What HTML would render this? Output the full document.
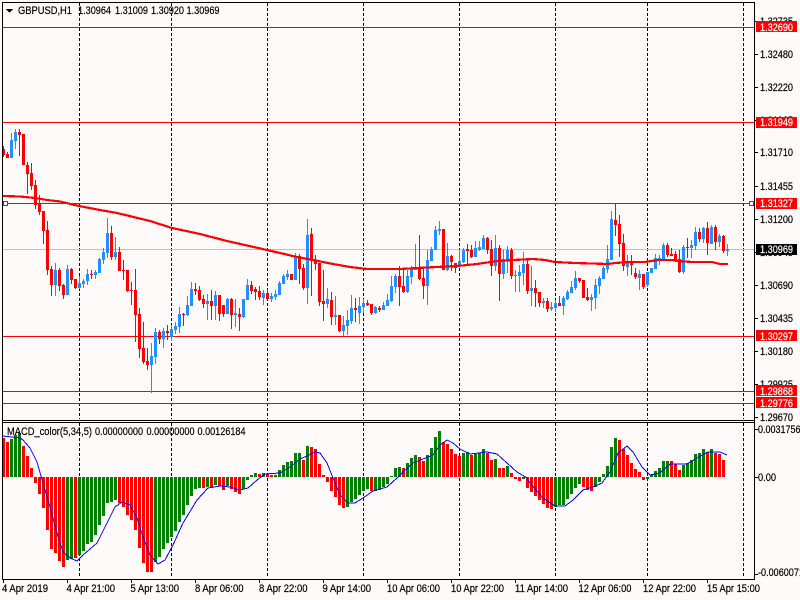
<!DOCTYPE html>
<html><head><meta charset="utf-8"><title>GBPUSD,H1</title>
<style>
html,body{margin:0;padding:0;background:#fffafa;width:800px;height:600px;overflow:hidden}
svg{display:block}
text{font-family:"Liberation Sans",sans-serif;font-size:11px;fill:#000;stroke:#000;stroke-width:.2px}
.w text,text.w{fill:#fff;stroke:#fff}
</style></head><body>
<svg width="800" height="600" viewBox="0 0 800 600" xmlns="http://www.w3.org/2000/svg">
<rect width="800" height="600" fill="#fffafa"/>
<g shape-rendering="crispEdges">
<!-- grid -->
<path d="M79.5 3V419M171.5 3V419M267.5 3V419M363.5 3V419M459.5 3V419M555.5 3V419M647.5 3V419M743.5 3V419M79.5 423V578M171.5 423V578M267.5 423V578M363.5 423V578M459.5 423V578M555.5 423V578M647.5 423V578M743.5 423V578" stroke="#000" stroke-width="1" stroke-dasharray="3 2" fill="none"/>
<!-- horizontal levels -->
<path d="M3 249.5H754" stroke="#c0c0c0" fill="none"/>
<path d="M3 27.5H754M3 122.5H754M3 203.5H754M3 336.5H754M3 391.5H754M3 403.5H754" stroke="#ff0000" fill="none"/>
<!-- blue wicks -->
<g transform="translate(.5 0)" fill="none">
<path stroke="#1e90ff" stroke-width="1" d="M11 133V158M15 129V149M55 263V296M67 265V295M79 276V289M83 279V288M87 269V285M95 270V279M99 258V273M103 248V264M107 218V258M115 237V260M151 343V393M155 328V364M163 328V348M171 325V341M175 322V334M179 307V333M187 296V316M191 282V306M207 294V320M215 291V320M227 298V314M235 299V327M243 299V318M247 279V300M263 290V305M271 293V302M275 290V300M279 281V295M283 274V284M287 270V280M295 253V280M307 219V304M327 288V308M335 296V325M343 316V336M347 310V335M351 295V324M359 297V324M363 299V313M375 306V314M383 302V310M387 294V306M391 276V302M395 274V293M407 270V293M411 266V284M415 244V270M427 250V305M431 247V261M435 226V250M439 221V235M447 243V271M459 249V266M463 248V263M475 241V257M479 241V251M483 235V249M495 235V271M503 250V279M507 246V273M515 270V292M519 265V292M523 252V285M531 266V306M543 298V308M551 302V311M555 300V312M563 296V315M567 290V300M571 281V293M575 271V290M591 294V311M595 279V309M599 276V294M603 266V279M607 245V273M611 211V260M627 255V276M639 270V290M647 272V287M651 268V273M655 254V269M659 255V265M663 243V260M683 245V274M691 240V258M695 227V250M703 227V243M711 225V244M719 234V247M727 244V256"/>
<path stroke="#1e90ff" stroke-width="3" d="M11 140V158M15 132V141M55 270V285M67 269V295M79 283V288M83 281V284M87 274V281M95 272V275M99 259V273M103 252V260M107 233V253M115 252V257M151 356V365M155 332V357M163 331V339M171 329V337M175 326V330M179 314V327M187 305V315M191 289V306M207 301V304M215 295V306M227 299V314M235 313V315M243 299V317M247 285V300M263 293V298M271 296V299M275 294V297M279 283V295M283 276V284M287 274V277M295 256V280M307 235V288M327 299V304M335 315V317M343 325V331M347 320V326M351 308V321M359 306V313M363 303V307M375 307V313M383 305V310M387 300V306M391 286V301M395 276V287M407 276V292M411 268V277M415 267V270M427 260V286M431 249V261M435 230V250M439 229V231M447 256V270M459 261V265M463 250V262M475 248V257M479 247V250M483 238V249M495 248V266M503 259V274M507 250V260M515 275V276M519 272V276M523 264V273M531 288V291M543 301V303M551 307V309M555 303V308M563 298V306M567 292V299M571 287V293M575 278V288M591 297V300M595 285V298M599 278V286M603 268V279M607 259V269M611 219V260M627 262V267M639 274V278M647 272V285M651 268V273M655 258V269M659 258V259M663 245V259M683 247V272M691 245V248M695 232V246M703 228V239M711 227V244M719 236V242M727 249V251"/>
<path stroke="#ff0000" stroke-width="1" d="M3 146V157M7 152V158M19 129V156M23 134V165M27 162V194M31 163V190M35 180V209M39 195V215M43 211V244M47 221V275M51 266V296M59 268V291M63 284V299M71 268V284M75 279V289M91 270V279M111 226V260M119 247V271M123 260V280M127 270V292M131 282V305M135 269V342M139 308V358M143 322V364M147 348V370M159 330V344M167 325V340M183 313V326M195 283V295M199 286V301M203 295V308M211 290V320M219 295V321M223 305V317M231 298V329M239 308V331M251 281V294M255 287V300M259 286V300M267 289V300M291 274V280M299 254V284M303 264V290M311 228V296M315 255V270M319 263V306M323 270V321M331 292V325M339 315V332M355 298V322M367 300V306M371 304V315M379 306V312M399 266V306M403 270V293M419 235V280M423 269V299M443 229V270M451 255V271M455 263V273M467 244V264M471 245V258M487 237V254M491 240V276M499 245V301M511 248V279M527 260V294M535 280V307M539 292V307M547 298V312M559 296V306M579 278V283M583 280V298M587 288V301M615 204V236M619 215V257M623 234V271M631 255V275M635 268V279M643 274V289M667 243V257M671 248V256M675 251V262M679 250V273M687 238V258M699 228V242M707 222V255M715 225V250M723 235V253"/>
<path stroke="#ff0000" stroke-width="3" d="M3 149V155M7 154V158M19 132V135M23 134V165M27 165V174M31 173V186M35 185V205M39 203V212M43 211V231M47 230V270M51 269V285M59 270V286M63 285V295M71 269V280M75 279V288M91 274V275M111 233V257M119 252V271M123 270V271M127 270V291M131 290V291M135 290V315M139 314V349M143 348V362M147 361V365M159 332V339M167 331V333M183 314V315M195 289V291M199 290V300M203 299V304M211 301V306M219 295V314M223 305V314M231 299V315M239 314V317M251 285V291M255 289V292M259 291V297M267 293V299M291 274V280M299 256V269M303 268V288M311 234V261M315 260V264M319 263V302M323 301V304M331 300V317M339 315V331M355 308V310M367 303V305M371 304V313M379 308V310M399 276V287M403 286V292M419 268V279M423 278V286M443 229V270M451 256V262M455 263V268M467 249V251M471 250V257M487 238V250M491 249V266M499 248V274M511 250V276M527 264V291M535 288V293M539 292V303M547 301V309M559 303V306M579 278V281M583 280V298M587 297V300M615 220V225M619 224V244M623 243V266M631 262V265M635 273V277M643 274V287M667 245V255M671 254V256M675 254V260M679 259V272M687 247V248M699 232V239M707 228V243M715 227V242M723 236V251"/>
</g>
<!-- MA -->
<polyline fill="none" stroke="#ff0000" stroke-width="2.2" shape-rendering="crispEdges" points="3,196 20,196.5 35,198 47,200 60,201.5 79,206 100,210 117,213 150,221 172,228 200,234 227,241 267,250 280,253 297,257 313,260 333,264 350,267 367,269 400,269 417,268 437,267 457,266 477,264 497,261 513,260 533,259 545,260 555,262 575,263 608,264 615,263 630,262 645,262 658,260 672,260 678,261 692,262 712,262 720,264 728,264"/>
<!-- markers -->
<g shape-rendering="crispEdges">
<rect x="3.5" y="201.5" width="4" height="4" fill="#fffafa" stroke="#ff0000"/>
<rect x="749.5" y="201.5" width="4" height="4" fill="#fffafa" stroke="#ff0000"/>
<!-- MACD bars -->
<g transform="translate(.5 0)" fill="none">
<path stroke="#008000" stroke-width="3" d="M11 477V439M15 477V435M19 477V433M67 477V560M71 477V559M79 477V555M83 477V551M87 477V544M91 477V542M95 477V535M99 477V525M103 477V516M107 477V503M111 477V502M115 477V500M155 477V562M159 477V557M163 477V549M167 477V543M171 477V537M175 477V531M179 477V522M183 477V515M187 477V505M191 477V496M195 477V489M199 477V488M207 477V487M215 477V485M227 477V486M243 477V489M247 477V480M251 477V475M255 477V473M263 477V473M275 477V475M279 477V470M283 477V465M287 477V462M291 477V461M295 477V453M299 477V453M307 477V446M347 477V507M351 477V502M355 477V499M359 477V495M363 477V491M367 477V489M375 477V491M379 477V490M383 477V487M387 477V484M391 477V476M395 477V468M399 477V467M407 477V463M411 477V458M415 477V455M427 477V455M431 477V448M435 477V437M439 477V431M463 477V453M467 477V452M475 477V454M479 477V453M483 477V449M495 477V459M507 477V466M523 477V479M555 477V507M559 477V505M563 477V505M567 477V499M571 477V494M575 477V488M579 477V484M595 477V487M599 477V482M603 477V474M607 477V466M611 477V447M615 477V438M647 477V479M651 477V475M655 477V471M659 477V468M663 477V461M667 477V461M683 477V465M687 477V463M691 477V460M695 477V454M699 477V453M703 477V449M711 477V449"/>
<path stroke="#ff0000" stroke-width="3" d="M3 477V438M7 477V442M23 477V446M27 477V456M31 477V468M35 477V483M39 477V494M43 477V508M47 477V530M51 477V549M55 477V553M59 477V561M63 477V567M75 477V558M119 477V503M123 477V507M127 477V515M131 477V520M135 477V530M139 477V548M143 477V563M147 477V572M151 477V572M203 477V488M211 477V488M219 477V486M223 477V490M231 477V489M235 477V492M239 477V494M259 477V474M267 477V474M271 477V475M303 477V460M311 477V447M315 477V449M319 477V464M323 477V475M327 477V482M331 477V491M335 477V497M339 477V505M343 477V508M371 477V491M403 477V468M419 477V457M423 477V461M443 477V442M447 477V444M451 477V449M455 477V454M459 477V456M471 477V455M487 477V453M491 477V460M499 477V468M503 477V468M511 477V473M515 477V479M519 477V481M527 477V488M531 477V492M535 477V496M539 477V500M543 477V504M547 477V508M551 477V509M583 477V487M587 477V490M591 477V491M619 477V440M623 477V449M627 477V455M631 477V463M635 477V469M639 477V472M643 477V480M671 477V461M675 477V464M679 477V470M707 477V452M715 477V453M719 477V454M723 477V460"/>
</g>
<!-- frame -->
<path d="M2.5 2V580M2 2.5H755M754.5 2V580M2 420.5H755M2 422.5H755M2 579.5H755" stroke="#000" fill="none"/>
<!-- ticks -->
<path d="M755 21.5H758M755 54.5H758M755 87.5H758M755 120.5H758M755 152.5H758M755 186.5H758M755 219.5H758M755 252.5H758M755 285.5H758M755 318.5H758M755 351.5H758M755 384.5H758M755 417.5H758M755 429.5H758M755 477.5H758M755 574.5H758M3.5 580V583M67.5 580V583M131.5 580V583M195.5 580V583M259.5 580V583M323.5 580V583M387.5 580V583M451.5 580V583M515.5 580V583M579.5 580V583M643.5 580V583M707.5 580V583" stroke="#000" fill="none"/>
</g>
<!-- signal -->
<polyline fill="none" stroke="#0000ff" stroke-width="1" shape-rendering="crispEdges" points="3,436 20,438 23,440 30,448 37,462 43,483 50,507 57,533 63,552 70,558 77,561 83,555 97,543 107,523 115,507 122,502 130,505 137,518 143,537 150,555 158,564 165,560 173,545 183,523 197,500 208,488 220,486 230,487 240,490 248,488 257,480 265,474 280,473 290,467 300,459 307,456 315,452 320,453 327,463 333,478 340,495 348,503 355,503 363,498 373,491 387,487 397,478 403,472 413,463 423,459 433,455 440,445 447,440 453,443 460,449 470,454 487,452 497,454 507,463 517,472 527,478 530,483 543,498 555,506 565,506 573,500 583,490 593,487 602,483 610,472 618,453 627,446 633,452 642,467 650,475 660,473 670,464 687,464 697,458 708,452 720,452 727,455"/>
<!-- title -->
<polygon points="6,9 13,9 9.5,13" fill="#000"/>
<text x="18" y="14" textLength="54" lengthAdjust="spacingAndGlyphs">GBPUSD,H1</text>
<text x="78" y="14" textLength="33" lengthAdjust="spacingAndGlyphs">1.30964</text>
<text x="115" y="14" textLength="33" lengthAdjust="spacingAndGlyphs">1.31009</text>
<text x="151" y="14" textLength="33" lengthAdjust="spacingAndGlyphs">1.30920</text>
<text x="186.5" y="14" textLength="33" lengthAdjust="spacingAndGlyphs">1.30969</text>
<text x="7" y="435" textLength="85" lengthAdjust="spacingAndGlyphs">MACD_color(5,34,5)</text>
<text x="95" y="435" textLength="48" lengthAdjust="spacingAndGlyphs">0.00000000</text>
<text x="146.5" y="435" textLength="48" lengthAdjust="spacingAndGlyphs">0.00000000</text>
<text x="197.5" y="435" textLength="48" lengthAdjust="spacingAndGlyphs">0.00126184</text>
<!-- right axis -->
<g>
<text x="760" y="25" textLength="33" lengthAdjust="spacingAndGlyphs">1.32735</text>
<text x="760" y="58" textLength="33" lengthAdjust="spacingAndGlyphs">1.32480</text>
<text x="760" y="91" textLength="33" lengthAdjust="spacingAndGlyphs">1.32220</text>
<text x="760" y="124" textLength="33" lengthAdjust="spacingAndGlyphs">1.31965</text>
<text x="760" y="156" textLength="33" lengthAdjust="spacingAndGlyphs">1.31710</text>
<text x="760" y="190" textLength="33" lengthAdjust="spacingAndGlyphs">1.31455</text>
<text x="760" y="223" textLength="33" lengthAdjust="spacingAndGlyphs">1.31200</text>
<text x="760" y="256" textLength="33" lengthAdjust="spacingAndGlyphs">1.30945</text>
<text x="760" y="289" textLength="33" lengthAdjust="spacingAndGlyphs">1.30690</text>
<text x="760" y="322" textLength="33" lengthAdjust="spacingAndGlyphs">1.30435</text>
<text x="760" y="355" textLength="33" lengthAdjust="spacingAndGlyphs">1.30180</text>
<text x="760" y="388" textLength="33" lengthAdjust="spacingAndGlyphs">1.29925</text>
<text x="760" y="421" textLength="33" lengthAdjust="spacingAndGlyphs">1.29670</text>
</g>
<!-- labels -->
<g shape-rendering="crispEdges">
<rect x="756" y="21" width="41" height="11" fill="#ff0000"/>
<rect x="756" y="117" width="41" height="11" fill="#ff0000"/>
<rect x="756" y="198" width="41" height="11" fill="#ff0000"/>
<rect x="756" y="244" width="41" height="11" fill="#000"/>
<rect x="756" y="330" width="41" height="11" fill="#ff0000"/>
<rect x="756" y="385" width="41" height="11" fill="#ff0000"/>
<rect x="756" y="397" width="41" height="11" fill="#ff0000"/>
</g>
<g class="w">
<text x="760" y="31" textLength="33" lengthAdjust="spacingAndGlyphs">1.32690</text>
<text x="760" y="126" textLength="33" lengthAdjust="spacingAndGlyphs">1.31949</text>
<text x="760" y="207" textLength="33" lengthAdjust="spacingAndGlyphs">1.31327</text>
<text x="760" y="253" textLength="33" lengthAdjust="spacingAndGlyphs">1.30969</text>
<text x="760" y="340" textLength="33" lengthAdjust="spacingAndGlyphs">1.30297</text>
<text x="760" y="395" textLength="33" lengthAdjust="spacingAndGlyphs">1.29868</text>
<text x="760" y="407" textLength="33" lengthAdjust="spacingAndGlyphs">1.29776</text>
</g>
<text x="758" y="433" textLength="47.5" lengthAdjust="spacingAndGlyphs">0.00317565</text>
<text x="758" y="481" textLength="18" lengthAdjust="spacingAndGlyphs">0.00</text>
<text x="758" y="576" textLength="51" lengthAdjust="spacingAndGlyphs">-0.00600719</text>
<!-- time axis -->
<text x="2" y="592" textLength="46" lengthAdjust="spacingAndGlyphs">4 Apr 2019</text>
<text x="66.5" y="592" textLength="48.5" lengthAdjust="spacingAndGlyphs">4 Apr 21:00</text>
<text x="130.5" y="592" textLength="48.5" lengthAdjust="spacingAndGlyphs">5 Apr 13:00</text>
<text x="195" y="592" textLength="48.5" lengthAdjust="spacingAndGlyphs">8 Apr 06:00</text>
<text x="259" y="592" textLength="48.5" lengthAdjust="spacingAndGlyphs">8 Apr 22:00</text>
<text x="322.5" y="592" textLength="48.5" lengthAdjust="spacingAndGlyphs">9 Apr 14:00</text>
<text x="387" y="592" textLength="53" lengthAdjust="spacingAndGlyphs">10 Apr 06:00</text>
<text x="451" y="592" textLength="53" lengthAdjust="spacingAndGlyphs">10 Apr 22:00</text>
<text x="515" y="592" textLength="53" lengthAdjust="spacingAndGlyphs">11 Apr 14:00</text>
<text x="578.5" y="592" textLength="53" lengthAdjust="spacingAndGlyphs">12 Apr 06:00</text>
<text x="643" y="592" textLength="53" lengthAdjust="spacingAndGlyphs">12 Apr 22:00</text>
<text x="707" y="592" textLength="53" lengthAdjust="spacingAndGlyphs">15 Apr 15:00</text>
</svg>
</body></html>
